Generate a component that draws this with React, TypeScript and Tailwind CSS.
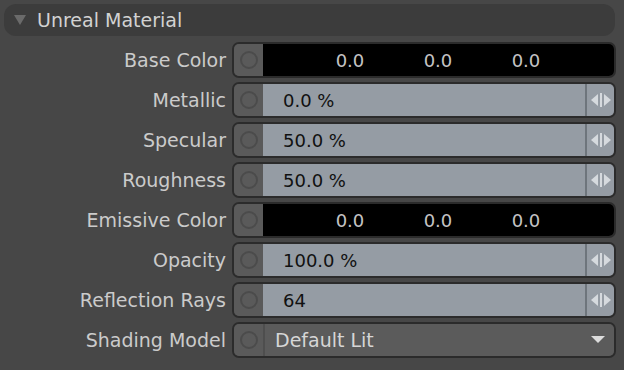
const font = { fontFamily: '"DejaVu Sans", "Liberation Sans", sans-serif' };

type Row =
  | { label: string; kind: "color" }
  | { label: string; kind: "slider"; value: string }
  | { label: string; kind: "select"; value: string };

const rows: Row[] = [
  { label: "Base Color", kind: "color" },
  { label: "Metallic", kind: "slider", value: "0.0 %" },
  { label: "Specular", kind: "slider", value: "50.0 %" },
  { label: "Roughness", kind: "slider", value: "50.0 %" },
  { label: "Emissive Color", kind: "color" },
  { label: "Opacity", kind: "slider", value: "100.0 %" },
  { label: "Reflection Rays", kind: "slider", value: "64" },
  { label: "Shading Model", kind: "select", value: "Default Lit" },
];

function SpinIcon() {
  return (
    <svg width="22" height="16" viewBox="0 0 22 16">
      <polygon points="1,8 8,2 8,14" fill="#d6dade" />
      <rect x="10" y="1" width="2" height="14" fill="#d6dade" />
      <polygon points="21,8 14,2 14,14" fill="#d6dade" />
    </svg>
  );
}

function Field({ row }: { row: Row }) {
  return (
    <div className="flex h-[36px] w-[384px] overflow-hidden rounded-[7px] border-2 border-[#2b2b2b]">
      <div className="flex w-[29px] items-center justify-center bg-[#5a5a5a]">
        <div className="h-[18px] w-[18px] rounded-full border-2 border-[#4b4b4b]" />
      </div>
      {row.kind === "color" && (
        <div className="flex flex-1 items-center bg-black pl-[43px] text-[18px] text-[#c4c4c4]">
          <span className="w-[88px] text-center">0.0</span>
          <span className="w-[88px] text-center">0.0</span>
          <span className="w-[88px] text-center">0.0</span>
        </div>
      )}
      {row.kind === "slider" && (
        <div className="flex flex-1 bg-[#959ca4]">
          <div className="flex flex-1 items-center pl-[20px] text-[18px] text-[#111]">{row.value}</div>
          <div className="flex w-[29px] items-center justify-center border-l-2 border-[#6e757c]">
            <SpinIcon />
          </div>
        </div>
      )}
      {row.kind === "select" && (
        <div className="flex flex-1 items-center justify-between border-l-2 border-[#4e4e4e] bg-[#5b5b5b] pl-[10px] pr-[9px] text-[19px] text-[#d6d6d6]">
          <span>{row.value}</span>
          <svg width="14" height="8" viewBox="0 0 14 8">
            <polygon points="0,0 14,0 7,7" fill="#dcdcdc" />
          </svg>
        </div>
      )}
    </div>
  );
}

export default function App() {
  return (
    <div className="h-[370px] w-[624px] bg-[#474747] pt-[4px]" style={font}>
      <div className="mx-[4px] flex h-[32px] w-[611px] items-center rounded-[12px] bg-[#3c3c3c] pl-[9px] text-[19px] text-[#d2d2d2]">
        <svg width="14" height="12" viewBox="0 0 14 12" className="mr-[10px]">
          <polygon points="1,1 13,1 7,11" fill="#6a6a6a" />
        </svg>
        Unreal Material
      </div>
      <div className="mt-[4px] flex flex-col">
        {rows.map((row) => (
          <div key={row.label} className="flex h-[40px] items-center">
            <div className="w-[227px] pr-[1px] text-right text-[19px] text-[#cbcbcb]">{row.label}</div>
            <div className="ml-[5px]">
              <Field row={row} />
            </div>
          </div>
        ))}
      </div>
    </div>
  );
}
